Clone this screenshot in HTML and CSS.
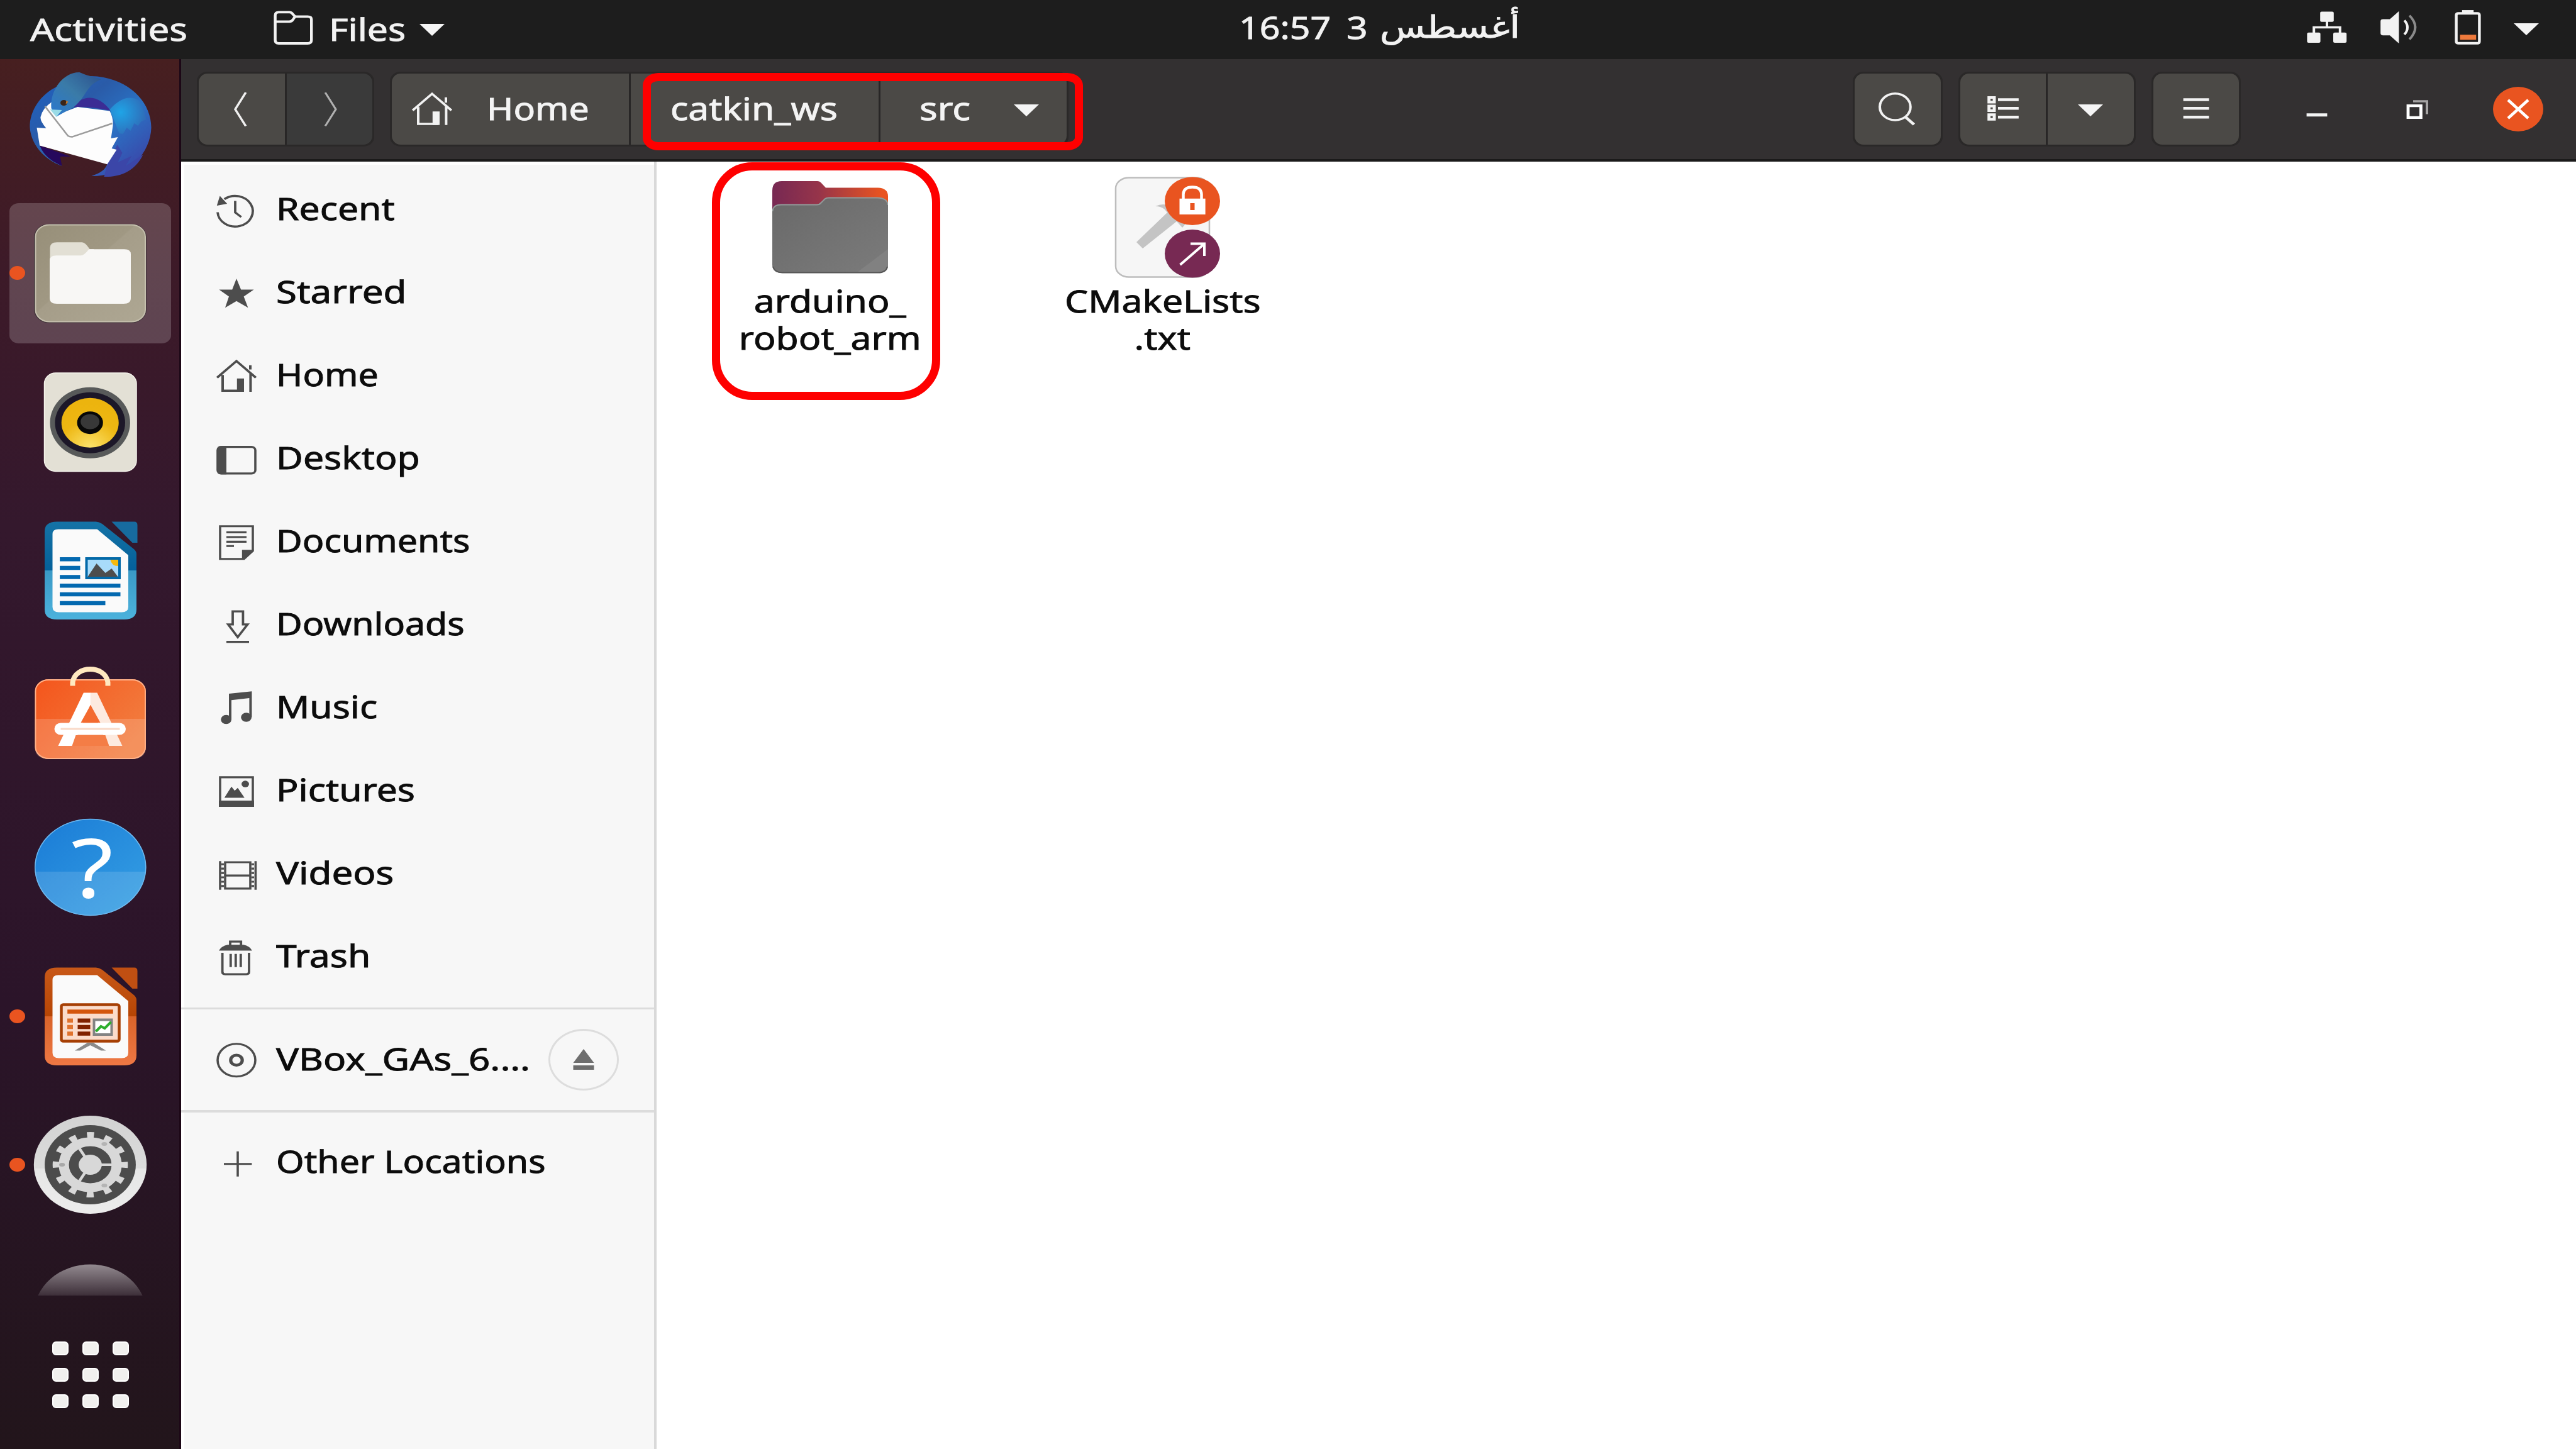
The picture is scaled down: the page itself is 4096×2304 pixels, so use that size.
FILE: index.html
```html
<!DOCTYPE html>
<html lang="en">
<head>
<meta charset="utf-8">
<title>src</title>
<link rel="stylesheet" href="styles.css">
</head>
<body>
<div class="desktop">

<header class="topbar">
  <span class="t wide activities">Activities</span>
  <div class="appmenu">
    <svg class="i16" viewBox="0 0 16 16" preserveAspectRatio="none"><path d="M.9 3V13.500Q.9 15 2.300 15H13.800Q15.300 15 15.300 13.500V4Q15.300 2.700 13.800 2.700H8.800L7.600 1.200Q7.300 .7 6.500 .7H2.300Q.9 .7 .9 2.200ZM.9 5H6.500Q7.500 5 8 4L8.800 2.700" fill="none" stroke="#f2f2f2" stroke-width="1.100"/></svg>
    <span class="t files-menu">Files</span>
    <svg class="tri" viewBox="0 0 10 5" preserveAspectRatio="none"><path d="M0 0H10L5 5Z"/></svg>
  </div>
  <div class="clock" dir="ltr">
    <span class="t narrow time">16:57</span><span class="t day">3</span><span class="t month" lang="ar" dir="rtl">أغسطس</span>
  </div>
  <div class="tray">
    <svg class="i16 net" viewBox="0 0 16 16" preserveAspectRatio="none" fill="#f2f2f2"><rect x="5.300" y="1" width="5.400" height="4.700" rx=".6"/><rect x=".1" y="10.600" width="5.300" height="4.700" rx=".6"/><rect x="10.500" y="10.600" width="5.300" height="4.700" rx=".6"/><path d="M8 5V8.200M2.800 11V8.200H13.200V11" fill="none" stroke="#f2f2f2" stroke-width="1"/></svg>
    <svg class="i16 vol" viewBox="0 0 16 16" preserveAspectRatio="none"><path d="M.3 5.500Q.3 4.500 1.300 4.500H4L7.600 .8V15.600L4 11.900H1.300Q.3 11.900 .3 10.900Z" fill="#f2f2f2"/><path d="M9.800 5Q12.200 8.200 9.800 11.500" fill="none" stroke="#f2f2f2" stroke-width="1"/><path d="M11.800 2.800Q16.400 8.200 11.800 13.700" fill="none" stroke="#8a8a8a" stroke-width="1"/></svg>
    <svg class="i16 bat" viewBox="0 0 16 16" preserveAspectRatio="none"><path d="M4.300 1.800H11.800Q12.600 1.800 12.600 2.600V14.600Q12.600 15.500 11.800 15.500H4.300Q3.400 15.500 3.400 14.600V2.600Q3.400 1.800 4.300 1.800Z" fill="none" stroke="#f2f2f2" stroke-width="1.100"/><path d="M5.700 .3H10.300V1.800H5.700Z" fill="#f2f2f2"/><path d="M4.900 11.600H11.300V13.900H4.900Z" fill="#ef7a3c"/></svg>
    <svg class="tri" viewBox="0 0 10 5" preserveAspectRatio="none"><path d="M0 0H10L5 5Z"/></svg>
  </div>
</header>

<div class="main">
<nav class="dock">
  <div class="app"><svg viewBox="15.500 -90 257 180">
    <defs>
      <linearGradient id="tb" x1="0" y1="0" x2="1" y2="1"><stop offset="0" stop-color="#1d62c4"/><stop offset=".35" stop-color="#2a5ba8"/><stop offset=".6" stop-color="#2a72c4"/><stop offset="1" stop-color="#4038a0"/></linearGradient>
      <linearGradient id="tbh" x1="0" y1="1" x2="1" y2="0"><stop offset="0" stop-color="#2a78d0"/><stop offset=".5" stop-color="#3a7ba8"/><stop offset="1" stop-color="#2c4f8c"/></linearGradient>
      <radialGradient id="tbw" cx=".3" cy=".4" r=".7"><stop offset="0" stop-color="#1fa4e6"/><stop offset="1" stop-color="#2f6cb8"/></radialGradient>
    </defs>
    <path d="M99 66C62 52 47 22 48 0C50 -28 70 -52 95 -62C115 -78 145 -79 165 -75C212 -66 241 -32 241 5C240 46 202 84 166 83L178 77Q165 82 146 82C160 77 168 72 171 63L120 20L64 34Q76 52 99 66Z" fill="url(#tb)"/>
    <path d="M175 -24C190 -40 205 -48 222 -38L230 -20L233 -8L225 -5L220 2L214 -2L208 10L202 5L196 15L190 14Z" fill="url(#tbw)"/>
    <path d="M187 32L195 45L188 60L210 50L200 66L228 48C215 75 190 84 166 83L171 63Z" fill="#3b46a8"/>
    <path d="M64 33.500L113 51L96 51L99 65.500C80 58 68 46 64 33.500Z" fill="#26085c"/>
    <path d="M83 -36L92 -16L124 -28L175 -21.400Q181 -10 180 2L177 22L188 20L178 38L186 40L171 63.300L63.600 33.500L59 5L74 6Q64 -6 65 -12Q68 -26 83 -36Z" fill="#fdfdfd"/>
    <path d="M72 -29L108.600 18Q112 20 116 19.400L179 -1.700" fill="none" stroke="#9b9b9b" stroke-width="2.500"/>
    <path d="M118 -28C132 -50 160 -46 176 -22Q146 -29 118 -28Z" fill="#3b2c94"/>
    <path d="M82 -26C80 -58 104 -84 127 -83L137 -79L162 -72C136 -62 140 -46 118 -28Q104 -20 90 -12.600Z" fill="url(#tbh)"/>
    <path d="M80 -24L99 -23L90 -12Z" fill="#9adbe6"/>
    <ellipse cx="102" cy="-34.500" rx="5.500" ry="4.500" fill="#3a2418"/><path d="M106 -38L109 -36L105 -32Z" fill="#c97a28"/>
  </svg></div>

  <div class="app active running"><svg viewBox="15.500 -90 257 180">
    <defs><linearGradient id="fm" x1="0" y1="0" x2="1" y2="1"><stop offset="0" stop-color="#978f79"/><stop offset=".45" stop-color="#a09883"/><stop offset=".46" stop-color="#a59d89"/><stop offset="1" stop-color="#aea793"/></linearGradient></defs>
    <rect x="54.500" y="-78" width="179" height="157.500" rx="24" ry="21" fill="#3f3338"/>
    <rect x="57" y="-76.500" width="174.500" height="154" rx="22" ry="19" fill="url(#fm)" stroke="#c6c0ae" stroke-width="2"/>
    <path d="M80 -40Q80 -48.800 91 -48.800H131Q136 -48.800 143 -38H150L135 -20H80Z" fill="#e2dfd4"/>
    <path d="M79.500 -20Q79.500 -27.700 90 -27.700H129Q134 -27.700 142 -37.800H198Q208.500 -37.800 208.500 -30V40Q208.500 49 197 49H91Q79.500 49 79.500 40Z" fill="#f8f7f5"/>
  </svg></div>

  <div class="app"><svg viewBox="15.500 -90 257 180">
    <defs><radialGradient id="rb" cx=".5" cy="1" r=".9"><stop offset="0" stop-color="#fbe36c"/><stop offset=".6" stop-color="#eeb713"/><stop offset="1" stop-color="#ecb40e"/></radialGradient></defs>
    <rect x="71" y="-78" width="146.500" height="156.500" rx="18" ry="17" fill="#e3e0d5" stroke="#f4f2ea" stroke-width="1.500"/>
    <ellipse cx="143.700" cy="1.200" rx="63.700" ry="56.500" fill="#585a5a"/>
    <ellipse cx="143.700" cy="1.200" rx="55.800" ry="48.500" fill="#1c1728"/>
    <ellipse cx="143.700" cy="1.200" rx="45.500" ry="39.500" fill="url(#rb)"/>
    <ellipse cx="143.700" cy="1.200" rx="20.600" ry="18" fill="#080808"/><ellipse cx="143.700" cy="-.5" rx="15" ry="12" fill="#383838"/>
  </svg></div>

  <div class="app"><svg viewBox="15.500 -90 257 180">
    <defs><linearGradient id="wr" x1="0" y1="0" x2="0" y2="1"><stop offset="0" stop-color="#1573a6"/><stop offset=".5" stop-color="#04609a"/><stop offset=".501" stop-color="#3a99c6"/><stop offset="1" stop-color="#4cb2dc"/></linearGradient></defs>
    <path d="M71.500 -62Q71.500 -77.500 91 -77.500H153Q158 -77.500 163 -74L212 -35Q217.500 -31 217.500 -26V62Q217.500 78 198 78H91Q71.500 78 71.500 62Z" fill="url(#wr)"/>
    <path d="M178 -77.500H214Q219 -77.500 219 -72V-44H211Z" fill="#176b9f"/>
    <path d="M84 -58Q84 -65.600 93 -65.600H155L204.500 -24.300V58Q204.500 66.500 194 66.500H94Q84 66.500 84 58Z" fill="#fafafa"/>
    <path d="M95.600 -17.700H128M95.600 -3.900H128M95.600 10.400H128M95.600 24.200H192M95.600 38H192M95.600 52H168" stroke="#0369b0" stroke-width="6.500"/>
    <rect x="138" y="-19" width="52.500" height="31" fill="#a8dbfa" stroke="#0369a8" stroke-width="4"/>
    <path d="M176 -17H188.500V-7Q178 -7 176 -17Z" fill="#f5b90c"/><path d="M140 10L154 -11L168 4L178 -3L188 10Z" fill="#4d4d4d"/>
  </svg></div>

  <div class="app"><svg viewBox="15.500 -90 257 180">
    <defs><linearGradient id="sw" x1="0" y1="0" x2="1" y2=".6"><stop offset="0" stop-color="#f4551c"/><stop offset="1" stop-color="#f27c3e"/></linearGradient></defs>
    <rect x="56" y="-63" width="176.500" height="127" rx="22" ry="19" fill="url(#sw)"/>
    <path d="M56 0H232.500V45Q232.500 64 210 64H78Q56 64 56 45Z" fill="#fff" opacity=".16"/>
    <rect x="57" y="-62" width="174.500" height="125" rx="21" ry="18" fill="none" stroke="#ffb28a" stroke-width="1.800"/>
    <path d="M116 -52.500V-58C120 -86 168 -86 172 -58V-52.500" fill="none" stroke="#ffe9c0" stroke-width="8"/>
    <path d="M133.400 -41.400H144.500V-22.400L116.400 43H93Z" fill="#fff"/><path d="M144.300 -41.400H155L195 43H172L144.300 -22.400Z" fill="#fdeadf"/>
    <path d="M144.500 -22L129 6H160Z" fill="#f36a2f"/><path d="M121 26H168L174 43H115Z" fill="#f47d46"/>
    <rect x="87" y="6.500" width="113.500" height="19" rx="10" fill="#fff"/><path d="M97 16H191" stroke="#f9d9c8" stroke-width="3"/>
  </svg></div>

  <div class="app"><svg viewBox="15.500 -90 257 180">
    <defs><linearGradient id="hp" x1="0" y1="0" x2="1" y2="1"><stop offset="0" stop-color="#1a7bd6"/><stop offset="1" stop-color="#35a0e4"/></linearGradient></defs>
    <ellipse cx="144.300" cy="0" rx="88.500" ry="77" fill="url(#hp)"/>
    <path d="M56 7H232.500C228 48 190 77 144.300 77S60 48 56 7Z" fill="#fff" opacity=".13"/>
    <ellipse cx="144.300" cy="0" rx="88" ry="76.500" fill="none" stroke="#6fb8ee" stroke-width="1.500"/>
    <text class="qmark" x="0" y="0" text-anchor="middle" transform="translate(147 48) scale(1.180 1)">?</text>
  </svg></div>

  <div class="app running"><svg viewBox="15.500 -90 257 180">
    <defs><linearGradient id="im" x1="0" y1="0" x2="0" y2="1"><stop offset="0" stop-color="#c85818"/><stop offset=".5" stop-color="#b64504"/><stop offset=".501" stop-color="#d9642a"/><stop offset="1" stop-color="#ee7844"/></linearGradient></defs>
    <path d="M71.500 -62Q71.500 -77.500 91 -77.500H153Q158 -77.500 163 -74L212 -35Q217.500 -31 217.500 -26V62Q217.500 78 198 78H91Q71.500 78 71.500 62Z" fill="url(#im)"/>
    <path d="M178 -77.500H214Q219 -77.500 219 -72V-44H211Z" fill="#c04f12"/>
    <path d="M84 -58Q84 -65.600 93 -65.600H155L204.500 -24.300V58Q204.500 66.500 194 66.500H94Q84 66.500 84 58Z" fill="#fafafa"/>
    <path d="M119.500 54.500L139.600 42H149L169 54.500H161L144 46L128 54.500Z" fill="#8a8a8a"/>
    <rect x="98" y="-18.500" width="92" height="58" rx="3" fill="#fbdccb" stroke="#a63f04" stroke-width="4.500"/>
    <path d="M107.700 -7.400H180.300" stroke="#d4560c" stroke-width="6.500"/>
    <path d="M107.500 6.800H116.500M107.500 17H116.500M107.500 27.500H116.500" stroke="#e0732e" stroke-width="6.500"/>
    <path d="M124 6.800H144M124 17H144M124 27.500H144" stroke="#802200" stroke-width="6.500"/>
    <rect x="150" y="5.500" width="28" height="23.500" fill="#fff" stroke="#838383" stroke-width="4"/><path d="M153 24L161 16L167 19L177 9" fill="none" stroke="#2cae2c" stroke-width="4"/>
  </svg></div>

  <div class="app running"><svg viewBox="15.500 -90 257 180">
    <defs><linearGradient id="st" x1="0" y1="0" x2="0" y2="1"><stop offset="0" stop-color="#d2d2d2"/><stop offset=".54" stop-color="#dcdcdc"/><stop offset=".541" stop-color="#e6e6e6"/><stop offset="1" stop-color="#ececec"/></linearGradient></defs>
    <g transform="translate(144 0) scale(1.150 1)">
      <circle r="78" fill="url(#st)"/><circle r="63" fill="#4c4c4c"/>
      <circle r="36.500" fill="none" stroke="#d8d8d8" stroke-width="14"/>
      <circle r="46.500" fill="none" stroke="#d8d8d8" stroke-width="11" stroke-dasharray="9.500 14.847" stroke-dashoffset="4.750"/>
      <circle r="16" fill="#d8d8d8"/>
      <path d="M0 0H33M0 0L-16.500 -28.600M0 0L-16.500 28.600" stroke="#d8d8d8" stroke-width="4"/>
      <ellipse cx="-39" cy="0" rx="4" ry="3" fill="#a8a8a8"/><ellipse cx="19.500" cy="-33" rx="4" ry="3" fill="#b4b4b4"/><ellipse cx="19.500" cy="33" rx="4" ry="3" fill="#b4b4b4"/>
    </g>
  </svg></div>

  <div class="app clipped"><svg viewBox="15.500 -90 257 180">
    <defs><linearGradient id="tr" x1="0" y1="0" x2="0" y2="1"><stop offset="0" stop-color="#938a90"/><stop offset=".33" stop-color="#3a2c36"/></linearGradient></defs>
    <ellipse cx="144" cy="0" rx="89" ry="77.500" fill="url(#tr)"/>
  </svg></div>

  <div class="grid"><i></i><i></i><i></i><i></i><i></i><i></i><i></i><i></i><i></i></div>
</nav>

<section class="window">
  <header class="headerbar">
    <div class="group">
      <button class="btn"><svg class="i16" viewBox="0 0 16 16" preserveAspectRatio="none"><path d="M9.700 .3L5.500 8L9.700 15.700" fill="none" stroke="#f0f0f0" stroke-width=".9"/></svg></button>
      <button class="btn off"><svg class="i16" viewBox="0 0 16 16" preserveAspectRatio="none"><path d="M6.300 .3L10.500 8L6.300 15.700" fill="none" stroke="#b0b0b0" stroke-width=".8"/></svg></button>
    </div>
    <div class="group path">
      <button class="btn crumb-home"><svg class="i16" viewBox="0 0 16 16" preserveAspectRatio="none" fill="none" stroke="#f2f2f2"><path d="M.3 8.500L8 .9L15.700 8.500M2.500 7V14.700H10.500M13.600 6.500V15.200M13.500 2.500V5"/><path d="M8.200 9H11V15.200H8.200Z" fill="#f2f2f2" stroke="none"/></svg><span class="t narrow">Home</span></button>
      <button class="btn crumb-ws"><span class="t">catkin_ws</span></button>
      <button class="btn crumb-src"><span class="t wide">src</span><svg class="tri" viewBox="0 0 10 5" preserveAspectRatio="none"><path d="M0 0H10L5 5Z"/></svg></button>
    </div>
    <div class="tools">
      <div class="group"><button class="btn"><svg class="i16" viewBox="0 0 16 16" preserveAspectRatio="none" fill="none" stroke="#f2f2f2"><circle cx="7.100" cy="6.900" r="6.100"/><path d="M11 11.300L14.600 15" stroke-width="1.200"/></svg></button></div>
      <div class="group"><button class="btn"><svg class="i16" viewBox="0 0 16 16" preserveAspectRatio="none" fill="none" stroke="#f4f4f4"><path d="M2.400 2.600H4.500V4.700H2.400ZM2.400 6.500H4.500V8.600H2.400ZM2.400 10.500H4.500V12.600H2.400Z" stroke-width="1.200"/><path d="M6 3.600H14.200M6 7.600H14.200M6 11.600H14.200" stroke-width="1.300"/></svg></button><button class="btn"><svg class="tri" viewBox="0 0 10 5" preserveAspectRatio="none"><path d="M0 0H10L5 5Z"/></svg></button></div>
      <div class="group"><button class="btn"><svg class="i16" viewBox="0 0 16 16" preserveAspectRatio="none"><path d="M2.900 3.600H13.100M2.900 7.600H13.100M2.900 11.600H13.100" stroke="#f2f2f2" stroke-width="1.300"/></svg></button></div>
    </div>
    <div class="controls">
      <svg class="i16" viewBox="0 0 16 16" preserveAspectRatio="none"><path d="M3.900 10.600H12.100" stroke="#f4f4f4" stroke-width="1.400"/></svg>
      <svg class="i16" viewBox="0 0 16 16" preserveAspectRatio="none" fill="none"><path d="M4.500 6.400H9.600V11.800H4.500Z" stroke="#fff" stroke-width="1.200"/><path d="M6.500 4.300H12V10.200" stroke="#a5a3a3"/></svg>
      <span class="close"><svg viewBox="0 0 80 71"><path d="M24 21L56 50M56 21L24 50" stroke="#fff" stroke-width="4.500"/></svg></span>
    </div>
  </header>

  <div class="content">
    <aside class="sidebar">
      <div class="place"><svg class="i16" viewBox="0 0 16 16" preserveAspectRatio="none" fill="none" stroke="#4d4d4d"><path d="M.5 8.500A7 7 0 1 0 3.200 2.500M7.500 3.300V8.600L9.900 10.700" stroke-width=".95"/><path d="M.2 5.500L1.400 1L4.300 4.600Z" fill="#4d4d4d" stroke="none"/></svg><span class="t">Recent</span></div>
      <div class="place"><svg class="i16" viewBox="0 0 16 16" preserveAspectRatio="none"><path d="M8 .9L9.800 5.900H14.900L10.900 9.100L12.600 14.200L8 11.200L3.500 14.200L5 9.100L1.100 5.900H6.300Z" fill="#4d4d4d"/></svg><span class="t wide">Starred</span></div>
      <div class="place"><svg class="i16" viewBox="0 0 16 16" preserveAspectRatio="none" fill="none" stroke="#4d4d4d"><path d="M.3 8.200L8 .6L15.700 8.200M2.500 7V14.200H10.500M13.600 6.500V14.700M13.500 2.500V4.500"/><path d="M8.200 8.600H11V14.700H8.200Z" fill="#4d4d4d" stroke="none"/></svg><span class="t narrow">Home</span></div>
      <div class="place"><svg class="i16" viewBox="0 0 16 16" preserveAspectRatio="none"><rect x=".5" y="1.900" width="15" height="12.200" rx="1.500" fill="none" stroke="#4d4d4d" stroke-width=".9"/><path d="M1.800 1.500H4V14.500H1.800Q.3 14.500 .3 13V3Q.3 1.500 1.800 1.500Z" fill="#4d4d4d"/></svg><span class="t">Desktop</span></div>
      <div class="place"><svg class="i16" viewBox="0 0 16 16" preserveAspectRatio="none" fill="none" stroke="#4d4d4d"><path d="M1.500 .2H14.500V11.500L11 15.200H1.500ZM4 3H12M4 5.200H12M4 7.300H12M4 9.300H7" stroke-width=".9"/><path d="M10.200 11H15L10.200 15.600Z" fill="#4d4d4d" stroke="none"/></svg><span class="t narrow">Documents</span></div>
      <div class="place"><svg class="i16" viewBox="0 0 16 16" preserveAspectRatio="none" fill="none" stroke="#4d4d4d"><path d="M6.500 1.200H10.600V7.200H12.400L8.500 13L4.700 7.200H6.500ZM4 15.200H13" stroke-width=".95"/></svg><span class="t narrow">Downloads</span></div>
      <div class="place"><svg class="i16" viewBox="0 0 16 16" preserveAspectRatio="none" fill="#4d4d4d"><path d="M5 .9L14.100 -.2V11.600H13.100V2.900L6 3.800V12.700H5Z"/><circle cx="3.900" cy="12.700" r="2.100"/><circle cx="11.900" cy="11.700" r="2.100"/></svg><span class="t">Music</span></div>
      <div class="place"><svg class="i16" viewBox="0 0 16 16" preserveAspectRatio="none"><path d="M1.500 1.100H14.500V14.200H1.500Z" fill="none" stroke="#4d4d4d" stroke-width=".9"/><path d="M1 11.800H15V14.700H1ZM3.200 10.500L6 5.400L7.300 7.300L8.500 6L11.200 10.500Z" fill="#4d4d4d"/><circle cx="11.500" cy="4.200" r="1.500" fill="#4d4d4d"/></svg><span class="t">Pictures</span></div>
      <div class="place"><svg class="i16" viewBox="0 0 16 16" preserveAspectRatio="none" fill="none" stroke="#4d4d4d"><path d="M3.500 2H13.500V14.100H3.500ZM3.500 8.100H13.500M1.500 1.500V14.600M15.600 1.500V14.600" stroke-width=".9"/><path d="M2.500 2.500V14.500M14.500 2.500V14.500" stroke-dasharray=".9 1.100"/></svg><span class="t wide">Videos</span></div>
      <div class="place"><svg class="i16" viewBox="0 0 16 16" preserveAspectRatio="none" fill="none" stroke="#4d4d4d"><path d="M2.400 5.500V14.200Q2.400 15.300 3.500 15.300H11.900Q13 15.300 13 14.200V5.500M5.700 6V12M7.700 6V12M9.700 6V12M5.500 2V.3H9.800V2" stroke-width=".95"/><path d="M1 4.500Q2 2.400 4.500 1.800H10.800Q13.300 2.400 14.200 4.500Z" fill="#4d4d4d" stroke="none"/></svg><span class="t">Trash</span></div>
      <hr>
      <div class="place device"><svg class="i16" viewBox="0 0 16 16" preserveAspectRatio="none" fill="none" stroke="#4d4d4d"><circle cx="8" cy="8" r="7.500" stroke-width=".9"/><circle cx="8" cy="8" r="2.300" stroke-width="1.300"/></svg><span class="t wide">VBox_GAs_6.…</span><span class="eject"><svg viewBox="0 0 34 34"><path d="M17 0L33.500 22H.5ZM.5 26H33.500V33H.5Z" fill="#6e6e6e"/></svg></span></div>
      <hr class="second">
      <div class="place"><svg class="i16" viewBox="0 0 16 16" preserveAspectRatio="none"><path d="M3 8H14.100M8.500 2.200V13.800" stroke="#4d4d4d" stroke-width=".9"/></svg><span class="t narrow">Other Locations</span></div>
    </aside>

    <main class="files">
      <div class="file">
        <svg viewBox="1228 270 184 178.500">
          <defs><linearGradient id="fb" x1="0" y1="0" x2="1" y2="0"><stop offset="0" stop-color="#772953"/><stop offset=".4" stop-color="#96344a"/><stop offset=".95" stop-color="#e95420"/></linearGradient><linearGradient id="ff" x1="0" y1="0" x2="1" y2="1"><stop offset="0" stop-color="#696969"/><stop offset="1" stop-color="#7b7b7b"/></linearGradient></defs>
          <path d="M1228 345V303Q1228 288 1243 288H1300Q1303 288 1305 290L1313 298.500H1396Q1412 299 1412 312V345Z" fill="url(#fb)"/>
          <path d="M1228 336Q1228 325 1242 325H1299Q1303 325 1306 322L1312 316Q1314 314 1318 314H1395Q1412 314 1412 326V421Q1412 434 1396 434H1244Q1228 434 1228 421Z" fill="url(#ff)"/>
          <path d="M1228.500 336Q1229 325.500 1242 325.500H1299Q1303 325.500 1306 322L1312 316Q1314 314.500 1318 314.500H1395Q1411.500 315 1411.500 326" fill="none" stroke="#919a99" stroke-width="2"/>
          <path d="M1412 396V421Q1412 433 1396 433H1363Z" fill="#818181"/>
          <path d="M1229 424Q1232 433.500 1244 433.500H1396Q1409 433.500 1411 424" fill="none" stroke="#565656" stroke-width="2"/>
        </svg>
        <span class="t">arduino_</span><span class="t">robot_arm</span>
      </div>
      <div class="file">
        <svg viewBox="1757 270 184 178.500">
          <rect x="1774" y="282.500" width="149" height="158" rx="21" ry="17" fill="#f6f6f6" stroke="#bdbdbd" stroke-width="2.500"/>
          <path d="M1807 385L1856 338L1852 333Q1846 328 1837 328Q1850 322 1862 328L1886 355L1880 362L1871 352L1817 395Z" fill="#c4c4c4"/>
          <ellipse cx="1896" cy="319.700" rx="44" ry="38.300" fill="#e95420"/>
          <path d="M1881.500 317V309Q1882 297.500 1896 297.500T1910.500 309V317" fill="none" stroke="#fff" stroke-width="4.500"/>
          <path d="M1875.500 315.800H1916.600V341H1875.500Z" fill="#fff"/><path d="M1892.500 323H1899.500V334H1892.500Z" fill="#e95420"/>
          <ellipse cx="1896" cy="403.300" rx="44" ry="38.300" fill="#772953"/>
          <path d="M1876.500 421L1914 388.500M1893 387.500H1915V407" fill="none" stroke="#fff" stroke-width="4"/>
        </svg>
        <span class="t">CMakeLists</span><span class="t">.txt</span>
      </div>
    </main>
  </div>
</section>
</div>

<div class="mark mark-path"></div>
<div class="mark mark-folder"></div>
</div>
</body>
</html>
```
FILE: styles.css
```css
* { box-sizing: border-box; }

body {
  margin: 0;
  background: #fff;
  font-family: "Noto Sans", "DejaVu Sans", sans-serif;
  font-size: 49px;
  color: #0c0c0c;
}

.desktop {
  position: relative;
  width: 4096px;
  height: 2304px;
  overflow: hidden;
  display: flex;
  flex-direction: column;
}

svg { display: block; flex: none; }
.i16 { width: 64px; height: 55.5px; overflow: visible; }
.tri { width: 40px; height: 19px; fill: #f5f5f5; }

/* Wide-set interface text */
.t {
  display: block;
  white-space: nowrap;
  line-height: 59px;
  transform: scaleX(1.2);
  transform-origin: left center;
  -webkit-text-stroke: .9px currentColor;
}
.t.narrow { transform: scaleX(1.168); }
.t.wide { transform: scaleX(1.225); }

/* Top panel */
.topbar {
  height: 94px;
  flex: none;
  display: flex;
  align-items: flex-start;
  background: #1d1d1d;
  color: #f2f2f2;
}
.activities { width: 386px; margin: 17px 0 0 48px; }
.appmenu { width: 1536px; display: flex; padding-top: 17px; }
.appmenu .files-menu { width: 144px; margin-left: 25px; }
.appmenu .tri { margin-top: 21px; }
.clock { display: flex; padding-top: 14px; }
.time { width: 171px; }
.day { width: 53px; }
.month { font-family: "DejaVu Sans", sans-serif; }
.tray { margin-left: auto; padding: 15px 59px 0 0; display: flex; }
.tray .vol { margin-left: 52px; }
.tray .bat { margin-left: 44px; }
.tray .tri { margin: 22px 0 0 41px; }

.main { flex: 1; display: flex; min-height: 0; }

/* Dock */
.dock {
  width: 288px;
  flex: none;
  padding: 14px 0 0 15px;
  border-right: 3px solid #1c0716;
  background: linear-gradient(#471f20 0, #3d1a28 330px, #34182d 740px, #2b1429 1500px, #22151b 100%);
}
.app { position: relative; width: 257px; height: 180px; margin-bottom: 56.3px; }
.app svg { position: relative; width: 257px; height: 180px; overflow: visible; }
.app.active::before {
  content: "";
  position: absolute;
  inset: -21.5px 0;
  border-radius: 15px / 13px;
  background: rgba(255, 255, 255, .19);
}
.app.running::after {
  content: "";
  position: absolute;
  left: 0;
  top: 79px;
  width: 25px;
  height: 22px;
  border-radius: 50%;
  background: #e95420;
}
.app.clipped { height: 62px; margin-bottom: 73px; overflow: hidden; }
.qmark { font-size: 130px; fill: #fff; font-family: "Noto Sans", sans-serif; }
.grid {
  display: grid;
  grid-template-columns: repeat(3, 26px);
  grid-auto-rows: 22px;
  gap: 19.7px 22.2px;
  margin-left: 68px;
}
.grid i { background: #f1f0ee; border: 2px solid #fff; border-radius: 6px; }

/* Window */
.window { flex: 1; display: flex; flex-direction: column; min-width: 0; }
.headerbar {
  height: 163px;
  flex: none;
  display: flex;
  align-items: flex-start;
  padding: 23px 52px 0 28px;
  background: #333031;
  border-bottom: 4px solid #1b1a1a;
  color: #f4f4f4;
}
.group {
  display: flex;
  height: 113px;
  gap: 3px;
  background: #282626;
  border-radius: 14px / 12px;
  box-shadow: 0 0 0 3px #2a2828;
}
.group + .group { margin-left: 31px; }
.btn {
  width: 136.5px;
  height: 113px;
  border: 0;
  padding: 0;
  display: flex;
  align-items: center;
  justify-content: center;
  background: #4b4946;
  color: inherit;
  font: inherit;
}
.btn:first-child { border-radius: 14px 0 0 14px; }
.btn:last-child { border-radius: 0 14px 14px 0; }
.btn:only-child { border-radius: 14px; }
.btn.off { background: #3a3a3a; }
.btn .t { margin-top: -3px; }
.btn .tri { margin-top: 3px; }
.crumb-home { width: 377px; justify-content: flex-start; padding-left: 32px; }
.crumb-home .t { margin-left: 55px; }
.crumb-ws { width: 394px; justify-content: flex-start; padding-left: 63px; }
.crumb-src { width: 296px; justify-content: flex-start; padding-left: 62px; }
.crumb-src .tri { margin-left: auto; margin-right: 44px; }
.tools { margin-left: auto; display: flex; }
.controls { display: flex; align-items: center; height: 113px; margin-left: 92px; gap: 95px; }
.close { width: 80px; height: 71px; border-radius: 50%; background: #e95420; margin-left: -6px; }

.content { flex: 1; display: flex; min-height: 0; }
.sidebar {
  width: 756px;
  flex: none;
  padding-top: 12.3px;
  background: #f7f7f7;
  border-right: 4px solid #d9d9d9;
  box-shadow: inset 5px 5px 0 #fff;
}
.place { height: 132.07px; display: flex; align-items: center; padding-left: 56px; }
.place .t { margin: -8px 0 0 31px; }
.sidebar hr { height: 3.5px; border: 0; margin: 12px 0 0; background: #dcdcdc; }
.sidebar hr.second { margin: 0 0 15.5px; }
.place.device { height: 160px; padding-right: 56px; }
.place.device .t { margin-top: -3px; }
.eject {
  width: 112px;
  height: 98px;
  margin-left: auto;
  border: 3px solid #dddddd;
  border-radius: 50%;
  display: flex;
  align-items: center;
  justify-content: center;
}
.eject svg { width: 34px; height: 34px; }

.files { flex: 1; display: flex; align-items: flex-start; padding: 13px 0 0 11px; }
.file { width: 529px; display: flex; flex-direction: column; align-items: center; }
.file svg { width: 184px; height: 178.5px; }
.file .t { transform-origin: center; }

/* Red highlight frames */
.mark { position: absolute; border: 13px solid #fe0000; }
.mark-path { left: 1022px; top: 115.5px; width: 700px; height: 123px; border-radius: 25px / 20px; }
.mark-folder { left: 1132px; top: 258px; width: 363px; height: 378px; border-radius: 64px; }
```
